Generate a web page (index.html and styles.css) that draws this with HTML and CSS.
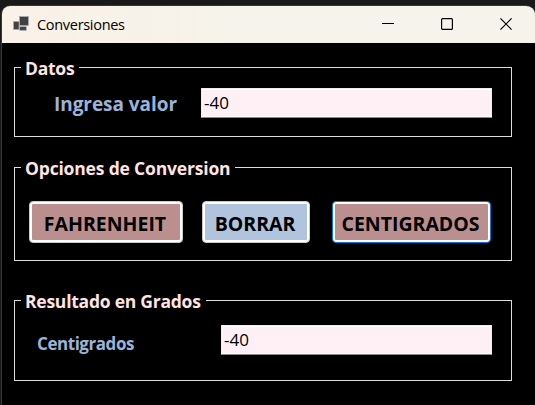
FILE: index.html
```html
<!DOCTYPE html>
<html lang="es">
<head>
<meta charset="utf-8">
<title>Conversiones</title>
<link rel="stylesheet" href="styles.css">
</head>
<body>
<main class="window">
  <header class="titlebar">
    <svg class="app-icon" width="18" height="16" viewBox="0 0 18 16" fill="#414141" stroke="#a9adb5" stroke-width=".7">
      <rect x=".5" y="5.5" width="5.5" height="8"/>
      <rect x="6.7" y="10.7" width="6.6" height="3.6"/>
      <rect x="6.5" y=".5" width="9" height="9"/>
    </svg>
    <h1 class="title">Conversiones</h1>
    <nav class="controls">
      <svg width="12" height="12" viewBox="0 0 12 12"><path d="M0 5.5h12"/></svg>
      <svg width="12" height="12" viewBox="0 0 12 12"><rect x=".6" y=".6" width="10.8" height="10.8" rx="1"/></svg>
      <svg width="12" height="12" viewBox="0 0 12 12"><path d="M.4.4l11.2 11.2M11.6.4L.4 11.6"/></svg>
    </nav>
  </header>
  <form class="form">
    <fieldset class="group group-data">
      <legend><span class="t-datos">Datos</span></legend>
      <div class="row">
        <label class="label-input" for="valor">Ingresa valor</label>
        <input class="field field-wide" id="valor" value="-40">
      </div>
    </fieldset>
    <fieldset class="group group-options">
      <legend><span class="t-opciones">Opciones de Conversion</span></legend>
      <div class="buttons">
        <button type="button" class="btn btn-f"><span>FAHRENHEIT</span></button>
        <button type="button" class="btn btn-clear"><span>BORRAR</span></button>
        <button type="button" class="btn btn-c"><span>CENTIGRADOS</span></button>
      </div>
    </fieldset>
    <fieldset class="group group-result">
      <legend><span class="t-resultado">Resultado en Grados</span></legend>
      <div class="row">
        <label class="label-result" for="resultado">Centigrados</label>
        <input class="field field-result" id="resultado" value="-40">
      </div>
    </fieldset>
  </form>
</main>
</body>
</html>
```
FILE: styles.css
```css
* { box-sizing: border-box; }
body {
  margin: 0;
  padding: 5px 0 0 1px;
  height: 405px;
  overflow: hidden;
  background: #191919;
  font-family: "Open Sans", "Noto Sans", sans-serif;
}
.window {
  height: 400px;
  border-left: 1px solid #383838;
  border-top: 1px solid #3b3235;
  border-radius: 9px 9px 0 0;
  background: #000;
  overflow: hidden;
}
.titlebar {
  display: flex;
  align-items: center;
  height: 37px;
  padding: 0 23px 0 11px;
  background: linear-gradient(90deg, #faf1e7, #f5f3eb 45%);
}
.app-icon { margin-top: -2px; }
.title {
  margin: 0 auto 0 6px;
  font-size: 14.5px;
  font-weight: 400;
  letter-spacing: -.3px;
  white-space: nowrap;
}
.controls { display: flex; gap: 47px; margin-top: -1px; }
.controls svg { fill: none; stroke: #000; stroke-width: 1.2; display: block; }
.form { padding: 14px 23px 0 12px; }
.group {
  display: block;
  min-width: 0;
  margin: 0;
  padding: 0;
  border: 1px solid #dcdcdc;
}
.group-data { height: 80px; }
.group-options { height: 104px; margin-top: 20px; }
.group-result { height: 91px; margin-top: 29px; }
legend {
  height: 21px;
  margin-left: 6px;
  padding: 0 5px 0 4px;
  line-height: 23px;
  font-size: 17.5px;
  font-weight: 700;
  color: #ffe4e1;
  white-space: nowrap;
}
.t-datos { letter-spacing: -.25px; }
.t-opciones { letter-spacing: -.18px; }
.t-resultado { letter-spacing: -.24px; }
.row { display: flex; align-items: center; justify-content: space-between; padding-right: 19px; }
.group-data .row { padding-top: 10px; }
.group-result .row { padding-top: 14px; }
label { color: #9ab4d8; font-weight: 700; white-space: nowrap; }
.label-input { margin: 2px 0 0 39px; font-size: 19px; letter-spacing: -.05px; }
.label-result { margin: 7px 0 0 22px; font-size: 17px; letter-spacing: -.45px; }
.field {
  height: 30px;
  padding: 0 0 1px 2px;
  border: 1px solid #eee;
  border-bottom-color: #868686;
  border-radius: 1px;
  background: #fff0f5;
  box-shadow: inset 0 -1px #fff, inset 0 1px #fff;
  font: 500 17px "Open Sans", sans-serif;
  letter-spacing: 0;
  color: #000;
  outline: 0;
}
.field-wide { width: 291px; }
.field-result { width: 271px; }
.buttons { display: flex; padding: 23px 0 0 14px; }
.btn {
  height: 42px;
  padding: 0;
  border: 1px solid #c9c9c9;
  border-radius: 4px;
  box-shadow: inset 0 0 0 2px #fff;
  font: 700 19.5px/28px "Open Sans", sans-serif;
  letter-spacing: 0;
  color: #000;
  white-space: nowrap;
}
.btn span { display: block; position: relative; top: 2px; left: -1px; }
.btn-f { width: 154px; background: #bc8f8f; }
.btn-clear { width: 108px; margin-left: 19px; background: #b0c4de; }
.btn-c { width: 159px; margin-left: 22px; background: #bc8f8f; border-color: #0078d7; }
```
